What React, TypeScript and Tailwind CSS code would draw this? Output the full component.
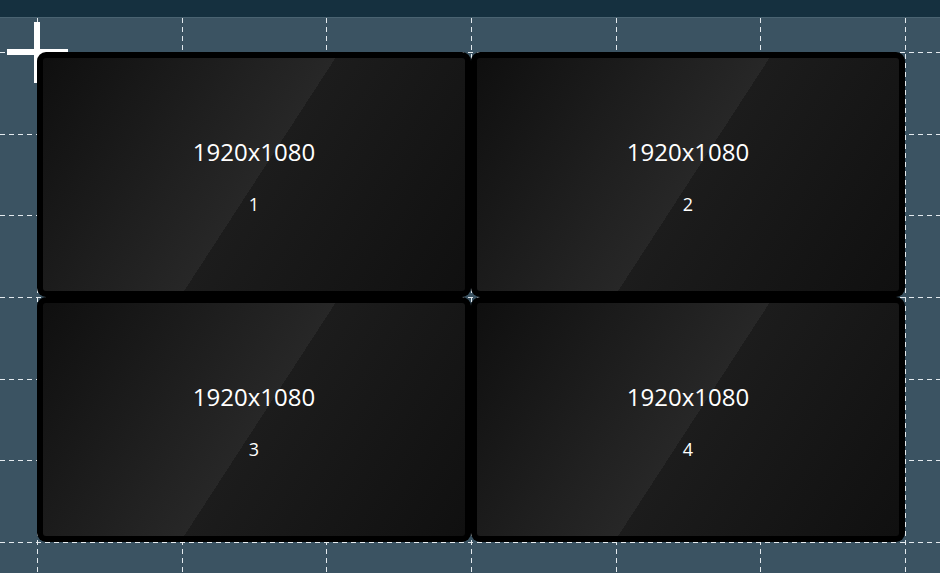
import React from 'react';

const COLS = [37, 181.67, 326.33, 471, 615.67, 760.33, 905];
const ROWS = [34, 115.67, 197.33, 279, 360.67, 442.33, 524];

function GridLines() {
  return (
    <svg className="absolute inset-0" width={940} height={555}>
      {COLS.map((x, i) => (
        <line key={'v' + i} x1={Math.round(x) + 0.5} y1={0} x2={Math.round(x) + 0.5} y2={555}
          stroke="#e4eaee" strokeWidth={1} strokeDasharray="5 4" />
      ))}
      {ROWS.map((y, i) => (
        <line key={'h' + i} x1={0} y1={Math.round(y) + 0.5} x2={940} y2={Math.round(y) + 0.5}
          stroke="#e4eaee" strokeWidth={1} strokeDasharray="5 4" />
      ))}
    </svg>
  );
}

function Screen({ n }: { n: number }) {
  return (
    <div className="rounded-[9px] bg-black p-[6px]">
      <div className="h-full rounded-[3px] bg-[linear-gradient(123deg,#0f0f0f_0%,#272727_51%,#1c1c1c_51%,#101010_100%)] flex flex-col items-center pt-[78px] text-white font-['Open_Sans',sans-serif]">
        <div className="text-[24px] leading-[32px]">1920x1080</div>
        <div className="mt-[24px] text-[18px] leading-[25px]">{n}</div>
      </div>
    </div>
  );
}

export default function App() {
  return (
    <div className="w-[940px] h-[573px] bg-[#3b5362] overflow-hidden">
      <div className="h-[18px] bg-[#15303f] border-b border-[#4a6371]" />
      <div className="relative w-[940px] h-[555px]">
        <GridLines />
        {/* move cursor */}
        <div className="absolute left-[7px] top-[31px] w-[61px] h-[6px] bg-white" />
        <div className="absolute left-[34px] top-[4px] w-[6px] h-[61px] bg-white" />
        <div className="relative ml-[37px] pt-[34px]">
          <div className="grid grid-cols-2 grid-rows-2 w-[868px] h-[490px]">
            {[1, 2, 3, 4].map((n) => (
              <Screen key={n} n={n} />
            ))}
          </div>
        </div>
      </div>
    </div>
  );
}
